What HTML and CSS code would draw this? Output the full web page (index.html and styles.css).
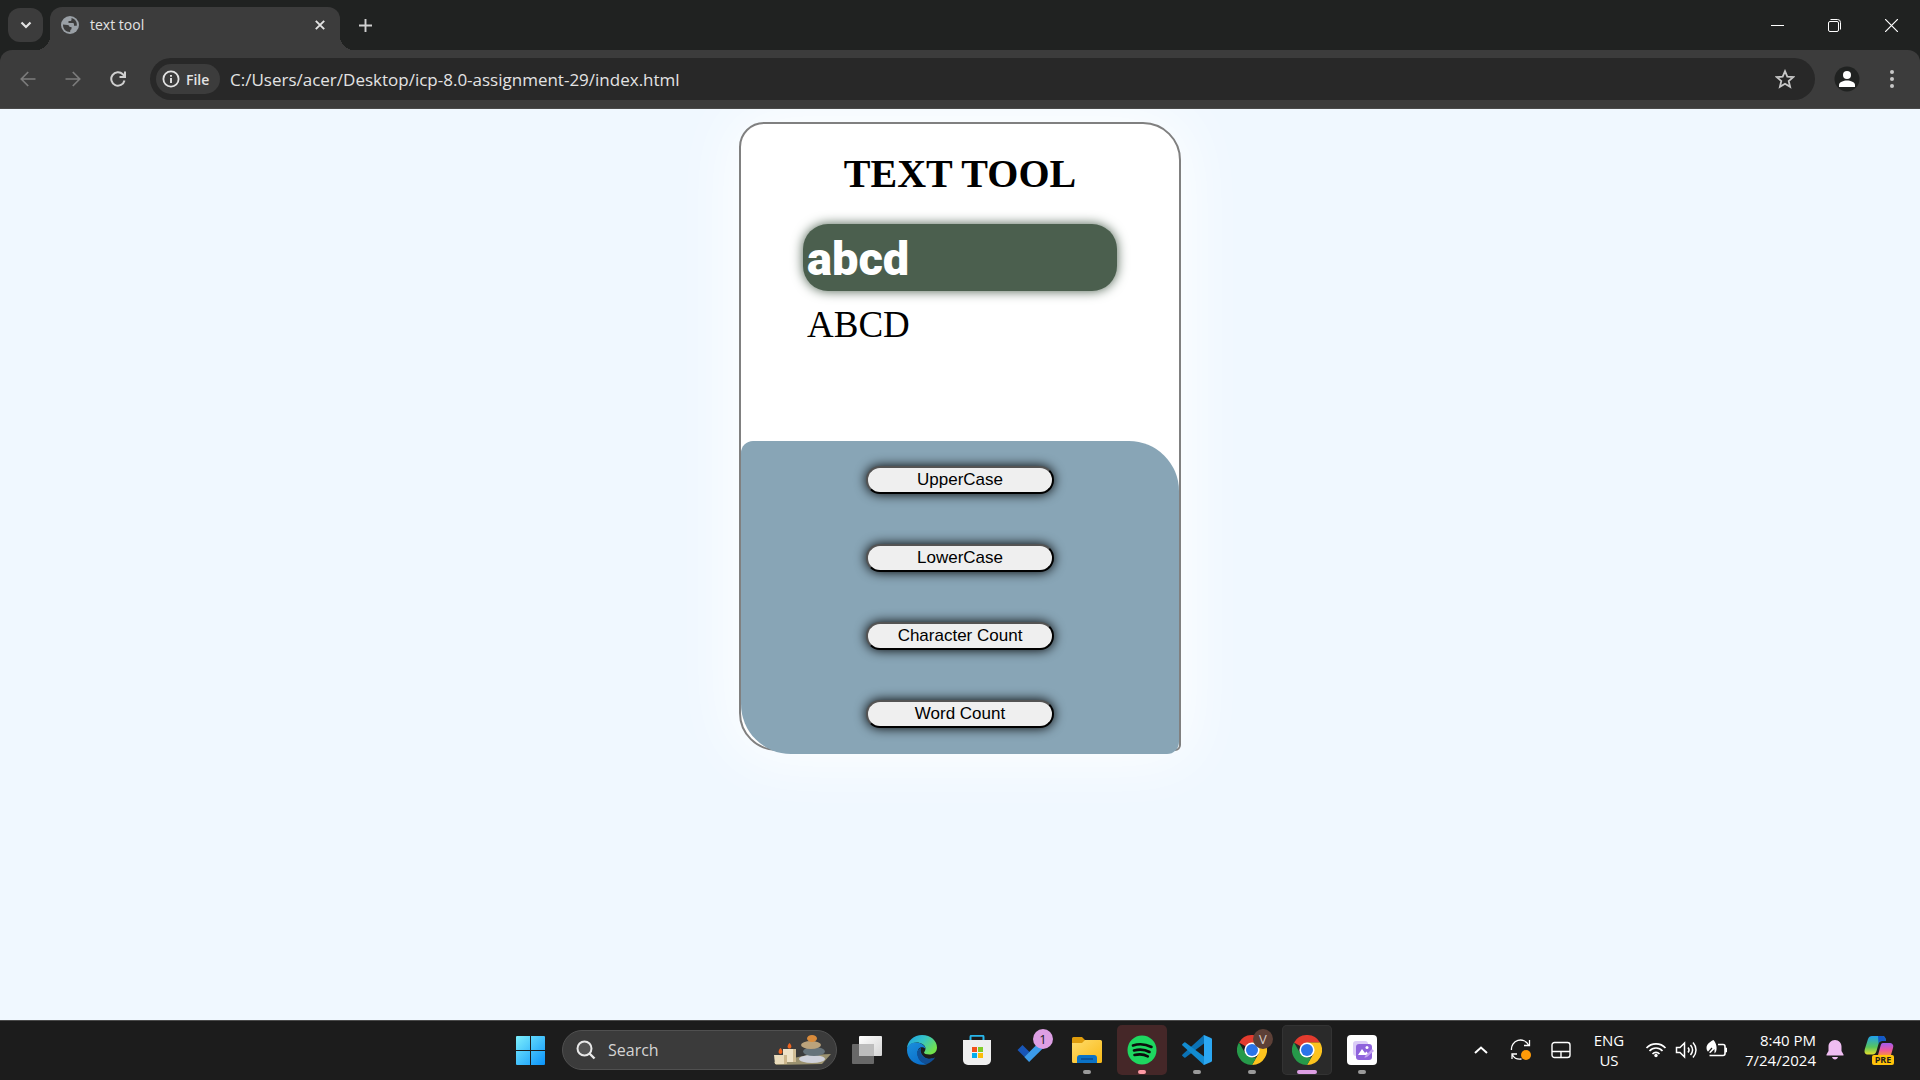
FILE: index.html
```html
<!DOCTYPE html>
<html lang="en">
<head>
<meta charset="utf-8">
<title>text tool</title>
<link rel="stylesheet" href="styles.css">
</head>
<body>
<header class="browser">
  <div class="tabstrip">
    <button class="tab-search" aria-label="Search tabs"><svg width="12" height="8" viewBox="0 0 12 8"><path d="M1.500 1.500 6 6l4.500-4.500" fill="none" stroke="#e3e3e3" stroke-width="2.200"/></svg></button>
    <div class="tab">
      <svg width="18" height="18" viewBox="0 0 18 18"><circle cx="9" cy="9" r="9" fill="#9aa0a6"/><path d="M2 8.500 6.500 9c1.500.2 2 1 2 2h2v2.200c-1 .2-1.300.8-1.300 2.800C5 16.200 1.800 13 2 8.500ZM10.500 2v1.500c0 1-.6 1.500-1.500 1.500H7.500v2h4.200c1 0 1.300.7 1.300 1.500v1.300h2.800C16.400 6 14 2.800 10.500 2Z" fill="#3c3c3c"/></svg>
      <span class="tab-title">text tool</span>
      <button class="icon-btn tab-close" aria-label="Close tab"><svg width="10" height="10" viewBox="0 0 10 10"><path d="m.8.8 8.400 8.400M9.200.8.8 9.200" stroke="#e3e3e3" stroke-width="1.900"/></svg></button>
    </div>
    <button class="icon-btn new-tab" aria-label="New tab"><svg width="13" height="13" viewBox="0 0 13 13"><path d="M6.500 0v13M0 6.500h13" stroke="#d0d0d0" stroke-width="1.900"/></svg></button>
    <div class="window-controls">
      <button class="icon-btn" aria-label="Minimize"><svg width="13" height="13" viewBox="0 0 13 13"><path d="M0 6.500h13" stroke="#fff"/></svg></button>
      <button class="icon-btn" aria-label="Restore"><svg width="13" height="13" viewBox="0 0 13 13" fill="none" stroke="#fff"><rect x=".5" y="2.500" width="10" height="10" rx="1.500"/><path d="M2.500.5h7a3 3 0 0 1 3 3v7"/></svg></button>
      <button class="icon-btn" aria-label="Close"><svg width="13" height="13" viewBox="0 0 13 13"><path d="m0 0 13 13M13 0 0 13" stroke="#fff" stroke-width="1.200"/></svg></button>
    </div>
  </div>
  <div class="toolbar">
    <button class="icon-btn nav" aria-label="Back"><svg width="16" height="16" viewBox="0 0 16 16" fill="none" stroke="#7c7c7c" stroke-width="1.700"><path d="M15.500 8H1.500M8.200 1 1.300 8l6.900 7"/></svg></button>
    <button class="icon-btn nav" aria-label="Forward"><svg width="16" height="16" viewBox="0 0 16 16" fill="none" stroke="#7c7c7c" stroke-width="1.700"><path d="M.5 8h14M7.800 1l6.900 7-6.900 7"/></svg></button>
    <button class="icon-btn nav" aria-label="Reload"><svg width="16" height="16" viewBox="0 0 16 16" fill="none" stroke="#d0d0d0" stroke-width="2"><path d="M14.500 9.500A6.700 6.700 0 1 1 12.800 3.300l1.700 1.700M15 .5V6H9.500"/></svg></button>
    <div class="omnibox">
      <button class="site-chip"><svg width="18" height="18" viewBox="0 0 18 18"><circle cx="9" cy="9" r="7.600" fill="none" stroke="#e3e3e3" stroke-width="1.800"/><path d="M9 8v5M9 5v1.800" stroke="#e3e3e3" stroke-width="1.900"/></svg>File</button>
      <input class="address" type="text" aria-label="Address" value="C:/Users/acer/Desktop/icp-8.0-assignment-29/index.html">
      <button class="icon-btn star" aria-label="Bookmark"><svg width="20" height="20" viewBox="0 0 20 20"><path d="m10 2.200 2.300 5.400 5.900.5-4.500 3.900 1.400 5.800-5.100-3.100-5.100 3.100L6.300 12 1.800 8.100l5.900-.5Z" fill="none" stroke="#c7c7c7" stroke-width="1.800"/></svg></button>
    </div>
    <button class="icon-btn profile" aria-label="Profile"><svg width="26" height="26" viewBox="0 0 26 26"><circle cx="13" cy="13" r="12.500" fill="#202221"/><circle cx="13" cy="9" r="4" fill="#fff"/><path d="M5 21v-2c0-3 4.500-4.500 8-4.500s8 1.500 8 4.500v2Z" fill="#fff"/></svg></button>
    <button class="icon-btn kebab" aria-label="Menu"><svg width="4" height="18" viewBox="0 0 4 18" fill="#c7c7c7"><circle cx="2" cy="2" r="2"/><circle cx="2" cy="9" r="2"/><circle cx="2" cy="16" r="2"/></svg></button>
  </div>
</header>

<main class="page">
  <section class="card">
    <h1 class="card-title">TEXT TOOL</h1>
    <input class="text-input" type="text" aria-label="Text" value="abcd">
    <p class="result">ABCD</p>
    <div class="actions">
      <button class="action">UpperCase</button>
      <button class="action">LowerCase</button>
      <button class="action">Character Count</button>
      <button class="action">Word Count</button>
    </div>
  </section>
</main>

<footer class="taskbar">
  <nav class="apps">
    <button class="app start" aria-label="Start"><svg width="29" height="29" viewBox="0 0 29 29"><defs><linearGradient id="win" x1="0" y1="0" x2="1" y2="1"><stop offset="0" stop-color="#7deffc"/><stop offset="1" stop-color="#0a93fb"/></linearGradient></defs><path d="M1 0h13v14H0V1a1 1 0 0 1 1-1ZM15 0h13a1 1 0 0 1 1 1v13H15ZM0 15h14v14H1a1 1 0 0 1-1-1ZM15 15h14v13a1 1 0 0 1-1 1H15Z" fill="url(#win)"/></svg></button>
    <label class="search">
      <svg width="20" height="20" viewBox="0 0 20 20"><circle cx="8.500" cy="8.500" r="7" fill="#555" stroke="#e8e8e8" stroke-width="2"/><path d="m13.500 13.500 5 5" stroke="#e8e8e8" stroke-width="2.400"/></svg>
      <input class="search-input" type="text" placeholder="Search">
      <svg width="58" height="34" viewBox="0 0 58 34"><path d="M0 29 34 22l23-1-9 10-46 1Z" fill="#9b9270"/><path d="M9 16h13v13H9Z" fill="#efe3c8"/><path d="M19 16h3v13h-3Z" fill="#d1bd95"/><path d="M0 22h13v9H1Z" fill="#eadcbc"/><path d="M10 22h3v9h-3Z" fill="#cdb78d"/><path d="M6.500 15c3 3 2 6 0 6s-3-3 0-6ZM15.500 10c3 3 2 5.500 0 5.500s-3-2.500 0-5.500Z" fill="#ef641f"/><ellipse cx="38" cy="26" rx="13" ry="4" fill="#cfd1da"/><ellipse cx="40" cy="18.500" rx="11" ry="4.500" fill="#66737a"/><ellipse cx="37" cy="12" rx="10" ry="4" fill="#bba37c"/><ellipse cx="38" cy="5.500" rx="5" ry="3.500" fill="#d98b3b"/></svg>
    </label>
    <button class="app" aria-label="Task view"><svg width="30" height="30" viewBox="0 0 30 30"><defs><linearGradient id="tv" x1="0" y1="0" x2="1" y2="1"><stop offset="0" stop-color="#fff"/><stop offset="1" stop-color="#d4d4d4"/></linearGradient></defs><rect x="0" y="9" width="22" height="20" rx="1" fill="#686868"/><rect x="7" y="1" width="23" height="20" rx="1" fill="url(#tv)"/><path d="M7 9h15v12H7Z" fill="#bdbdbd"/></svg></button>
    <button class="app" aria-label="Edge"><svg width="30" height="30" viewBox="0 0 30 30"><defs><linearGradient id="e1" x1="0" y1="0" x2="1" y2=".6"><stop offset="0" stop-color="#1a9ee6"/><stop offset=".5" stop-color="#35c3c6"/><stop offset="1" stop-color="#72e24b"/></linearGradient><linearGradient id="e2" x1="0" y1="0" x2=".6" y2="1"><stop offset="0" stop-color="#1b8fdb"/><stop offset="1" stop-color="#0b6fcb"/></linearGradient></defs><path d="M0 14C0 6 7 0 15 0c9 0 15 6 15 12.500 0 4.500-3.500 7-7.500 7-3.500 0-5.500-1-5.500-2 0-.8 1.500-1.500 1.500-4C18.500 10 14 7.500 9.500 7.500 4.500 7.500 1 10.500 0 14Z" fill="url(#e1)"/><path d="M0 15c0-4.500 4-7.500 9-7.500s9.500 3 9.500 6.500c-2-3-8-2.500-8 4 0 7 6 10 9.500 11.200C9 32 0 24.500 0 15Z" fill="url(#e2)"/><path d="M14 12.800c-5 2-4.500 9-.5 12 4 3 10.500 2.700 14.500-2.300-2.500 1.500-8 2-11-.8-3.500-3-3.500-6-3-8.900Z" fill="#145ba5"/><path d="M10.500 17c-1 6.500 4 12 9.500 12 3-1 6-3.500 8-6.500-5 2.500-10 1.500-12.500-1S12.300 15 13.500 13Z" fill="#104f96"/></svg></button>
    <button class="app" aria-label="Store"><svg width="30" height="30" viewBox="0 0 30 30"><path d="M8.500 6V1.800a1 1 0 0 1 1-1h11a1 1 0 0 1 1 1V6" fill="none" stroke="#28b6ea" stroke-width="2"/><path d="M1 5h28v20a5 5 0 0 1-5 5H6a5 5 0 0 1-5-5Z" fill="#efefef"/><path d="M10 12h5v5h-5Z" fill="#f1511b"/><path d="M16 12h5v5h-5Z" fill="#80cc28"/><path d="M10 18h5v5h-5Z" fill="#00adef"/><path d="M16 18h5v5h-5Z" fill="#fbbc09"/></svg></button>
    <button class="app" aria-label="To Do"><svg width="30" height="30" viewBox="0 0 30 30"><path d="m5.500 10 7 7-5 5L.5 15Z" fill="#1856b8"/><path d="m7.300 22 14-14 5 5-14.200 14Z" fill="#3b9bea"/></svg><span class="badge badge-count">1</span></button>
    <button class="app running" aria-label="Files"><svg width="30" height="30" viewBox="0 0 30 30"><defs><linearGradient id="fl" x1="0" y1="0" x2="1" y2="1"><stop offset="0" stop-color="#ffdc6b"/><stop offset="1" stop-color="#f9b916"/></linearGradient></defs><path d="M0 3.500A1.500 1.500 0 0 1 1.500 2H10l3 3h14v6H0Z" fill="#df9c0c"/><path d="M0 8h10l3-3h15.500A1.500 1.500 0 0 1 30 6.500v20a1.500 1.500 0 0 1-1.500 1.500h-27A1.500 1.500 0 0 1 0 26.500Z" fill="url(#fl)"/><path d="M5 28v-5a3 3 0 0 1 3-3h14a3 3 0 0 1 3 3v5Z" fill="#0b72c6"/><path d="M9 24h12" stroke="#0a4b90" stroke-width="1.500"/></svg></button>
    <button class="app running alert" aria-label="Spotify"><svg width="30" height="30" viewBox="0 0 30 30"><circle cx="15" cy="15" r="14.500" fill="#1ed760"/><path d="M6 10.500c6-2 12.500-1.500 18.500 1.500M7 15.500c5.500-1.500 11-1 15.500 1.500M7.500 20c5-1.200 9.500-.8 13.300 1.300" fill="none" stroke="#0c0c0c" stroke-width="2.600" stroke-linecap="round"/></svg></button>
    <button class="app running" aria-label="Code"><svg width="30" height="30" viewBox="0 0 30 30"><path d="M22 0v8.500L3.500 22.500a1 1 0 0 1-1.300 0L.5 21a1 1 0 0 1 0-1.500Z" fill="#0b72b5"/><path d="M22 30v-8.500L3.500 7.500a1 1 0 0 0-1.300 0L.5 9a1 1 0 0 0 0 1.500Z" fill="#128bd0"/><path d="m22 0 7 3a1.500 1.500 0 0 1 1 1.500v21a1.500 1.500 0 0 1-1 1.500l-7 3c-.6-.2-.2-1 0-2V2c-.2-1-.6-1.800 0-2Z" fill="#2ba7f2"/></svg></button>
    <button class="app running" aria-label="Chrome, profile V"><svg width="30" height="30" viewBox="0 0 30 30"><g id="chrome"><path d="M15 15 2 7.500A15 15 0 0 1 28 7.500H15Z" fill="#e33b2e"/><path d="M15 7.500h13A15 15 0 0 1 15 30l6.500-11.300Z" fill="#fcc31e"/><path d="M2 7.500 8.500 18.700 15 22.500h4.300L15 30A15 15 0 0 1 2 7.500Z" fill="#269a4a"/><circle cx="15" cy="15" r="7.600" fill="#fff"/><circle cx="15" cy="15" r="6" fill="#2a74e8"/></g></svg><span class="badge badge-profile">V</span></button>
    <button class="app active" aria-label="Chrome"><svg width="30" height="30" viewBox="0 0 30 30"><use href="#chrome"/></svg></button>
    <button class="app running" aria-label="Snipping"><svg width="30" height="30" viewBox="0 0 30 30"><rect width="30" height="30" rx="4" fill="#fff"/><rect x="6" y="6" width="15" height="15" rx="3" fill="#dccdf7"/><rect x="9" y="9" width="16" height="16" rx="3" fill="#8f63dc"/><path d="m11 20 4-6 3 4 1.500-1.500L22 20Z" fill="#fff"/><circle cx="20" cy="12.500" r="1.500" fill="#fff"/><path d="m18 21 7-7 2 2-7 6-2.500.8Z" fill="#c4a2f2"/></svg></button>
  </nav>
  <div class="tray">
    <button class="tray-btn" aria-label="Hidden icons"><svg width="14" height="8" viewBox="0 0 14 8"><path d="m1 7 6-5.500L13 7" fill="none" stroke="#fff" stroke-width="2"/></svg></button>
    <button class="tray-btn" aria-label="Updates"><svg width="22" height="22" viewBox="0 0 22 22"><path d="M1.500 11A9 9 0 0 1 18.500 6M19.500 1v5.500H14M2 20v-5h5M2.500 16c2 3.500 6 4.500 9 4" fill="none" stroke="#fff" stroke-width="1.300"/><circle cx="16" cy="16" r="5" fill="#ff9b08"/></svg></button>
    <button class="tray-btn" aria-label="Touchpad"><svg width="20" height="18" viewBox="0 0 20 18"><path d="M3.500 1.500h13a2.500 2.500 0 0 1 2.500 2.500v10a2.500 2.500 0 0 1-2.500 2.500h-13A2.500 2.500 0 0 1 1 14V4a2.500 2.500 0 0 1 2.500-2.500ZM1 10.500h18M10 10.500v6" fill="none" stroke="#fff" stroke-width="1.400"/></svg></button>
    <button class="tray-btn language"><span>ENG</span><span>US</span></button>
    <button class="status" aria-label="Network, sound, battery">
      <svg width="30" height="22" viewBox="0 0 30 22" fill="none" stroke="#fff" stroke-width="1.700"><path d="M5.500 9c5-5.500 14-5.500 19 0M8.500 12c3.500-4 9.500-4 13 0M11.500 15c2-2.200 5-2.200 7 0"/><circle cx="15" cy="16.500" r="1.700" fill="#fff" stroke="none"/></svg>
      <svg width="30" height="22" viewBox="0 0 30 22" fill="none" stroke="#fff" stroke-width="1.500"><path d="M5.500 8.500H9L13.500 4v14L9 13.500H5.500ZM17 8.500c1.300 1.500 1.300 3.500 0 5M19.500 6c2.500 3 2.500 7 0 10M22 3.500c4 4.500 4 10.500 0 15"/></svg>
      <svg width="30" height="22" viewBox="0 0 30 22"><path d="M17 5.500h5a2 2 0 0 1 2 2v7a2 2 0 0 1-2 2H8.500" fill="none" stroke="#fff" stroke-width="1.600"/><path d="M24 9h1.500v4H24" fill="#fff" stroke="#fff"/><path d="M12.500 1c-3 1.500-7 4-7 8 0 2.500 1.500 4.500 4 5l4-4v4.500c3-2 3-9-1-13.500Z" fill="#fff"/><path d="m5 16 6-7" stroke="#1c1c1c" stroke-width="1.200"/></svg>
    </button>
    <button class="clock"><span>8:40 PM</span><span>7/24/2024</span></button>
    <button class="icon-btn bell" aria-label="Notifications"><svg width="18" height="20" viewBox="0 0 18 20" fill="#efbdf2"><path d="M9 0c4 0 6.500 3 6.500 6.500V11l2 3.500v1H.5v-1l2-3.500V6.500C2.500 3 5 0 9 0ZM6 17h6c-.5 1.500-1.500 2.500-3 2.500S6.500 18.500 6 17Z"/></svg></button>
    <button class="icon-btn copilot" aria-label="Copilot"><svg width="30" height="30" viewBox="0 0 30 30"><defs><linearGradient id="c1" x1="0" y1="0" x2="0" y2="1"><stop offset="0" stop-color="#1fa0ee"/><stop offset=".6" stop-color="#58c45c"/><stop offset="1" stop-color="#e4df2c"/></linearGradient><linearGradient id="c2" x1="0" y1="0" x2="0" y2="1"><stop offset="0" stop-color="#a05cf0"/><stop offset=".6" stop-color="#ee579b"/><stop offset="1" stop-color="#f78a4a"/></linearGradient></defs><path d="M8 1h10c3 0 3.500 2 4 5h-4c-2 0-3 1-3.500 3l-2 7c-.7 2-1.500 3.500-4 3.500H4c-3.500 0-4-2.500-3-6L4 4c.7-2 2-3 4-3Z" fill="url(#c1)"/><path d="M14 1h4c3 0 3.500 2 4 5h-4c-2 0-3 1-3.500 3Z" fill="#1458c7"/><path d="M19 8h6c3.500 0 5 2 4 5l-2 7H14l2.500-9c.5-2 1-3 2.500-3Z" fill="url(#c2)"/></svg><span class="pre">PRE</span></button>
  </div>
</footer>
</body>
</html>
```

FILE: styles.css
```css
* { box-sizing: border-box; }

body {
  margin: 0;
  min-height: 100vh;
  display: flex;
  flex-direction: column;
  background: #f0f8ff;
  font-family: "Open Sans", "Noto Sans", sans-serif;
}

button {
  font-family: inherit;
  color: inherit;
}

svg {
  display: block;
  flex: none;
}

.icon-btn {
  display: grid;
  place-items: center;
  padding: 0;
  border: 0;
  background: none;
}

/* Browser window */
.browser {
  position: relative;
  z-index: 1;
  background: #202221;
  color: #e3e3e3;
}

.tabstrip {
  display: flex;
  height: 50px;
  padding-left: 8px;
}

.tab-search {
  display: grid;
  place-items: center;
  width: 35px;
  height: 34px;
  margin: 8px 7px 0 0;
  padding: 0;
  border: 0;
  border-radius: 12px;
  background: #3c3c3c;
}

.tab {
  position: relative;
  display: flex;
  align-items: center;
  gap: 11px;
  width: 290px;
  margin-top: 7px;
  padding: 0 11px 7px;
  border-radius: 12px 12px 0 0;
  background: #3c3c3c;
}

.tab::before,
.tab::after {
  content: "";
  position: absolute;
  bottom: 0;
  width: 14px;
  height: 14px;
}

.tab::before {
  right: 100%;
  background: radial-gradient(circle at 0 0, transparent 14px, #3c3c3c 14px);
}

.tab::after {
  left: 100%;
  background: radial-gradient(circle at 100% 0, transparent 14px, #3c3c3c 14px);
}

.tab-title {
  flex: 1;
  font-size: 14px;
  line-height: 20px;
}

.tab-close {
  width: 18px;
  height: 20px;
}

.new-tab {
  width: 50px;
}

.window-controls {
  display: flex;
  margin-left: auto;
}

.window-controls .icon-btn {
  width: 57px;
}

.toolbar {
  display: flex;
  align-items: center;
  height: 59px;
  padding: 0 6px 0 5px;
  border-bottom: 1px solid #4a4a4a;
  border-radius: 12px 12px 0 0;
  background: #3c3c3c;
}

.nav {
  width: 45px;
  height: 45px;
}

.omnibox {
  flex: 1;
  display: flex;
  align-items: center;
  gap: 10px;
  height: 42px;
  margin: 0 9px 0 10px;
  padding: 0 20px 0 6px;
  border-radius: 21px;
  background: #282828;
}

.site-chip {
  display: flex;
  align-items: center;
  gap: 6px;
  width: 64px;
  height: 30px;
  padding: 0 6px;
  border: 0;
  border-radius: 15px;
  background: #3c3c3c;
  font-size: 14px;
  font-weight: 600;
}

.address {
  flex: 1;
  min-width: 0;
  padding: 0;
  border: 0;
  background: none;
  color: #e3e3e3;
  font-family: inherit;
  font-size: 17px;
}

.profile,
.kebab {
  width: 45px;
  height: 45px;
}

/* Text tool */
.page {
  flex: 1;
  padding: 13px 16px;
  font-family: "Liberation Serif", serif;
}

.card {
  display: flex;
  flex-direction: column;
  align-items: center;
  max-width: 442px;
  margin: 0 auto;
  border: 2px solid #808080;
  border-radius: 25px 38px 6px 38px;
  background: #fff;
  box-shadow: 0 0 62px 6px #fff;
}

.card-title {
  margin: 27px 0;
  font-size: 40px;
  line-height: 46px;
}

.text-input {
  width: 314px;
  height: 67px;
  padding: 2px 4px 0;
  border: 0;
  border-radius: 25px;
  background: #4b5f4e;
  box-shadow: 0 0 12px #4b5f4e;
  color: #fff;
  font-family: Roboto, "Liberation Sans", sans-serif;
  font-size: 47px;
  font-weight: 900;
}

.result {
  width: 314px;
  min-height: 138px;
  margin: 12px 0 0;
  padding: 0 4px;
  font-size: 37px;
  line-height: 44px;
}

.actions {
  align-self: stretch;
  display: flex;
  flex-direction: column;
  align-items: center;
  gap: 50px;
  margin-bottom: -5px;
  padding: 25px 0 26px;
  border-radius: 12px 50px 12px 50px;
  background: #88a5b6;
}

.action {
  width: 188px;
  height: 28px;
  padding: 0;
  border: 2px outset #000;
  border-radius: 14px;
  background: #efefef;
  box-shadow: 0 0 12px #000;
  color: #000;
  font-family: "Liberation Sans", sans-serif;
  font-size: 17px;
  line-height: 20px;
}

/* Taskbar */
.taskbar {
  display: grid;
  grid-template-columns: 1fr auto 1fr;
  align-items: center;
  height: 60px;
  padding: 0 26px 1px 0;
  border-top: 1px solid #4a4a4a;
  background: #1c1c1c;
  color: #fff;
}

.apps {
  grid-column: 2;
  display: flex;
  align-items: center;
  gap: 5px;
}

.app {
  position: relative;
  display: grid;
  place-items: center;
  width: 50px;
  height: 50px;
  padding: 0;
  border: 0;
  border-radius: 5px;
  background: none;
}

.start {
  padding-right: 3px;
}

.running::after,
.active::after {
  content: "";
  position: absolute;
  bottom: 1px;
  left: 50%;
  width: 8px;
  height: 4px;
  margin-left: -4px;
  border-radius: 2px;
  background: #9a9a9a;
}

.alert {
  background: #452728;
}

.alert::after {
  background: #ff99a4;
}

.active {
  background: #2a2a2a;
  box-shadow: inset 0 0 0 1px #333;
}

.active::after {
  width: 20px;
  margin-left: -10px;
  background: #dd9fe4;
}

.badge {
  position: absolute;
  top: 4px;
  right: 4px;
  width: 20px;
  height: 20px;
  border-radius: 50%;
  font-size: 13px;
  line-height: 20px;
  text-align: center;
}

.badge-count {
  background: #dd9fe4;
  color: #1c1c1c;
}

.badge-profile {
  background: #5d4037;
  color: #d7ccc8;
}

.search {
  display: flex;
  align-items: center;
  width: 275px;
  height: 40px;
  padding: 0 4px 0 13px;
  border: 1px solid #505050;
  border-radius: 20px;
  background: #3b3b3b;
}

.search-input {
  flex: 1;
  min-width: 0;
  padding: 0 0 0 12px;
  border: 0;
  background: none;
  color: #fff;
  font-family: inherit;
  font-size: 16px;
}

.search-input::placeholder {
  color: #d4d4d4;
}

.tray {
  display: flex;
  align-items: center;
  justify-content: flex-end;
  font-size: 15px;
  line-height: 20px;
}

.tray-btn {
  display: grid;
  place-items: center;
  width: 40px;
  height: 50px;
  padding: 0;
  border: 0;
  background: none;
  font-size: inherit;
  line-height: inherit;
}

.language {
  width: 56px;
  align-content: center;
}

.status {
  display: flex;
  margin-left: 4px;
  padding: 0;
  border: 0;
  background: none;
}

.clock {
  display: flex;
  flex-direction: column;
  align-items: flex-end;
  width: 85px;
  padding: 0;
  border: 0;
  background: none;
  font-size: inherit;
  line-height: inherit;
}

.bell {
  width: 38px;
  height: 40px;
}

.copilot {
  position: relative;
  width: 30px;
  height: 30px;
  margin-left: 10px;
}

.pre {
  position: absolute;
  right: 0;
  bottom: 0;
  width: 22px;
  height: 10px;
  border-radius: 2px;
  background: #ffc20a;
  color: #1c1c1c;
  font-size: 9px;
  font-weight: 700;
  line-height: 10px;
}
```
